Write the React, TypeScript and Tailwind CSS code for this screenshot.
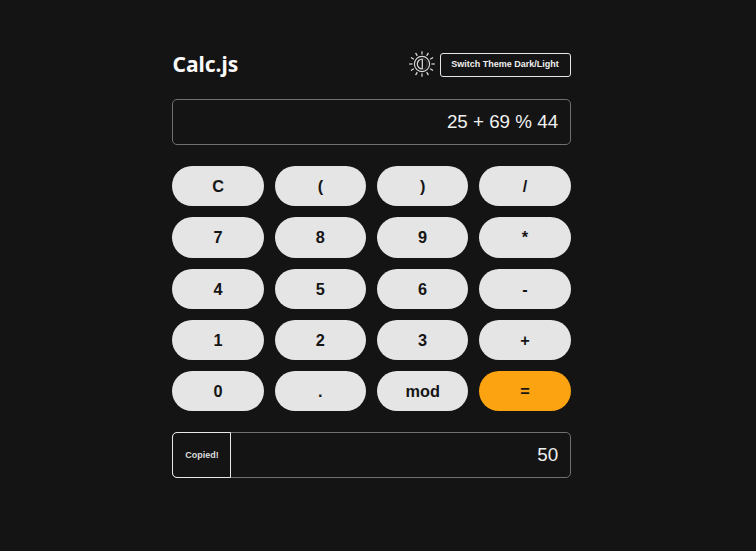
const keys = [
  'C', '(', ')', '/',
  '7', '8', '9', '*',
  '4', '5', '6', '-',
  '1', '2', '3', '+',
  '0', '.', 'mod', '=',
];

const rayAngles = [0, 30, 60, 90, 120, 150, 180, 210, 240, 270, 300, 330];

function ThemeIcon() {
  return (
    <svg className="h-[26px] w-[26px]" viewBox="-13 -13 26 26" fill="none" stroke="#dcdcdc">
      <circle r="7.6" strokeWidth="1.1" />
      <path d="M0.3 -5A5 5 0 0 0 0.3 5Z" strokeWidth="1.2" />
      <path d="M0 -5.4A5.4 5.4 0 0 1 0 5.4" strokeWidth="0.7" stroke="#555" />
      {rayAngles.map((angle) => (
        <path key={angle} d="M0 -9.4V-12.8" strokeWidth="1.2" transform={`rotate(${angle})`} />
      ))}
    </svg>
  );
}

export default function App() {
  return (
    <div className="flex h-[551px] w-[756px] justify-center overflow-hidden bg-[#141414] pr-[13px] pt-[51px] font-['Liberation_Sans',Arial,sans-serif] text-[#f0f0f0]">
      <main className="flex w-[398.2px] flex-col">
        <header className="flex h-[26px] items-center justify-between">
          <h1 className="w-[70px] whitespace-nowrap font-['Noto_Sans','Open_Sans',sans-serif] text-[21px] font-bold leading-[26px] text-[#fafafa]">
            Calc.js
          </h1>
          <div className="flex items-center gap-[5px]">
            <ThemeIcon />
            <button className="mt-px h-6 w-[131px] whitespace-nowrap rounded-[3px] border-[1.5px] border-[#e6e6e6] text-[9px] font-bold">
              Switch Theme Dark/Light
            </button>
          </div>
        </header>

        <div className="mt-[21.5px] flex h-[46px] items-center justify-end rounded-[5px] border border-[#707070] pr-[11.5px] pt-px text-[18.8px]">
          25 + 69 % 44
        </div>

        <div className="mt-[21.5px] grid grid-cols-4 gap-[11px]">
          {keys.map((key) => (
            <button
              key={key}
              className={`h-[40.3px] rounded-full text-[16.3px] font-bold text-[#151515] ${key === '=' ? 'bg-[#fca311]' : 'bg-[#e5e5e5]'}`}
            >
              {key}
            </button>
          ))}
        </div>

        <div className="mt-[21px] flex h-[46px] rounded-[5px] border border-[#707070] text-[18.8px]">
          <button className="-my-px -ml-px w-[59px] rounded-l-[5px] border border-[#e8e8e8] text-[9px] font-bold text-[#dedede]">
            Copied!
          </button>
          <div className="flex flex-1 items-center justify-end pr-[11.5px]">50</div>
        </div>
      </main>
    </div>
  );
}
